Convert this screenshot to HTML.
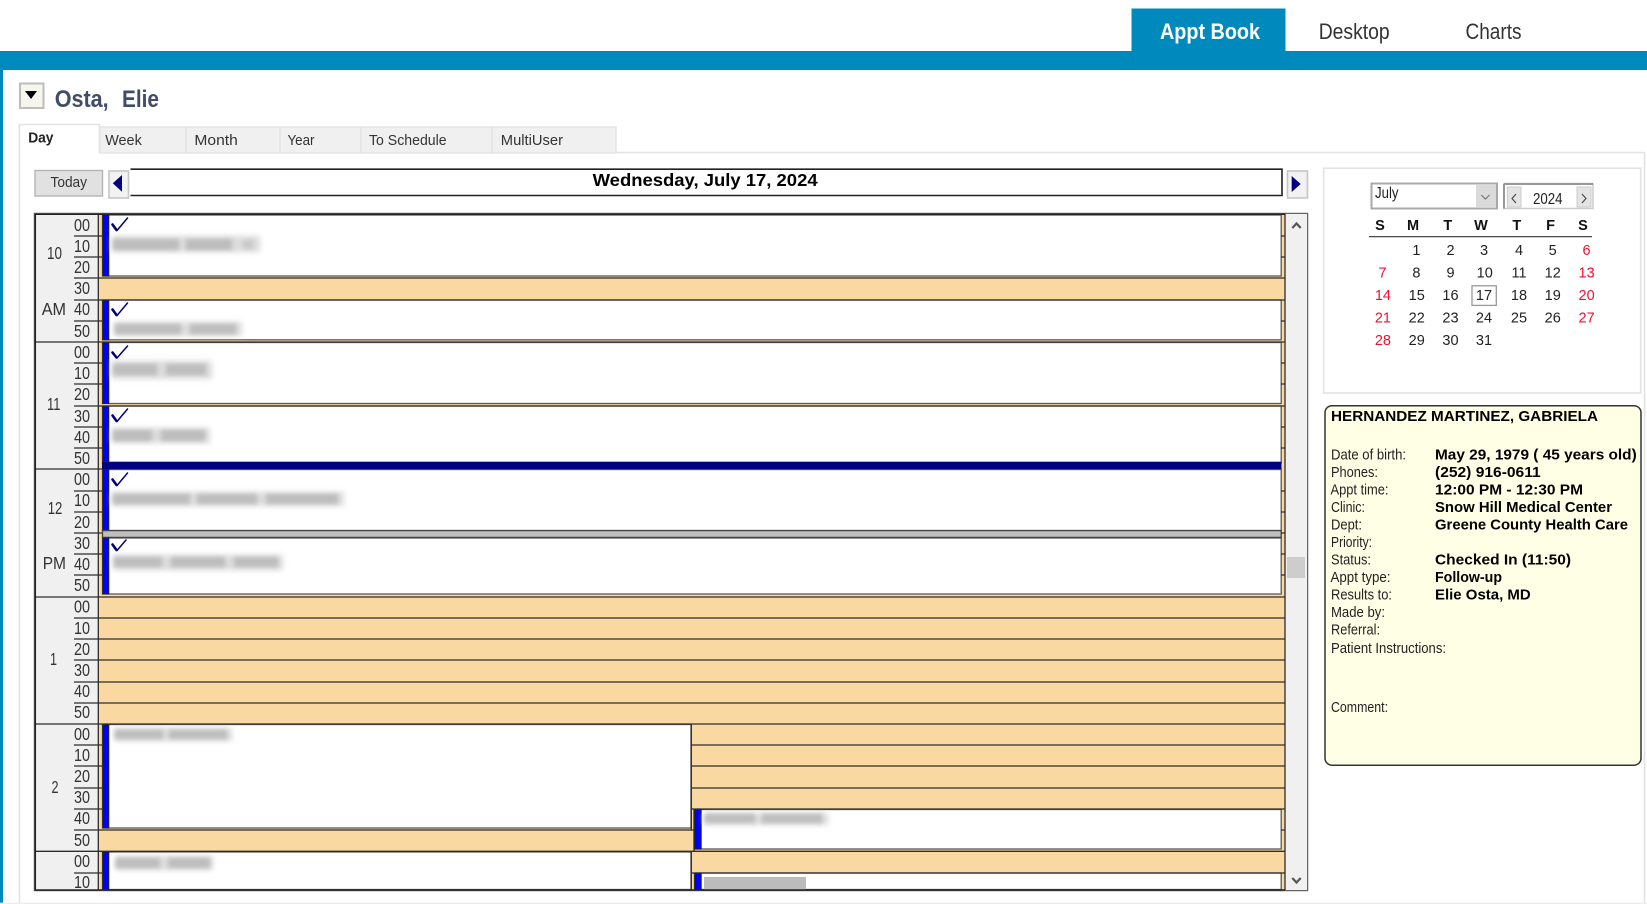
<!DOCTYPE html>
<html><head><meta charset="utf-8"><title>Appt Book</title>
<style>
html,body{margin:0;padding:0;background:#fff;width:1647px;height:904px;overflow:hidden}
svg{display:block}
text{font-family:"Liberation Sans",sans-serif;fill:#222}
.m{font-size:17.5px;fill:#333}
.h{font-size:17.5px;fill:#333}
.t{font-size:15px;fill:#333}
.d{font-size:14.5px;text-anchor:middle;fill:#222}
.l{font-size:15px;fill:#222}
.v{font-size:15px;font-weight:bold;fill:#000}
</style></head><body>
<svg width="1647" height="904" viewBox="0 0 1647 904" xmlns="http://www.w3.org/2000/svg">
<defs>
<filter id="b" x="-20%" y="-80%" width="140%" height="260%"><feGaussianBlur stdDeviation="3"/></filter>
<filter id="c" x="-10%" y="-80%" width="120%" height="260%"><feGaussianBlur stdDeviation="2"/></filter>
</defs>
<rect width="1647" height="904" fill="#fff"/>

<!-- header -->
<rect x="1131.5" y="8.5" width="154" height="44" fill="#0089bd"/>
<rect x="0" y="51" width="1647" height="19" fill="#0089bd"/>
<rect x="0" y="70" width="3" height="834" fill="#0089bd"/>
<text x="1160" y="39" font-size="22" font-weight="bold" style="fill:#fff" textLength="100" lengthAdjust="spacingAndGlyphs">Appt Book</text>
<text x="1318.7" y="39" font-size="22" style="fill:#333" textLength="71" lengthAdjust="spacingAndGlyphs">Desktop</text>
<text x="1465.5" y="39" font-size="22" style="fill:#333" textLength="56" lengthAdjust="spacingAndGlyphs">Charts</text>

<!-- title -->
<rect x="20" y="83.5" width="23.5" height="24.5" fill="#f6f6ec" stroke="#bdbdbd" stroke-width="2"/>
<path d="M25 91H37L31 99Z" fill="#000"/>
<text x="54.7" y="107" font-size="24" font-weight="bold" style="fill:#3f4d66" textLength="54" lengthAdjust="spacingAndGlyphs">Osta,</text>
<text x="122" y="107" font-size="24" font-weight="bold" style="fill:#3f4d66" textLength="37" lengthAdjust="spacingAndGlyphs">Elie</text>

<!-- tabs -->
<path d="M19.5 904V124.5H99.5V152.5H1644.5V904" fill="none" stroke="#e3e3e3" stroke-width="1.6"/>
<path d="M0 903.3H1647" stroke="#ececec" stroke-width="1.4"/>
<g fill="#f0f0f0" stroke="#e3e3e3" stroke-width="1.4">
<rect x="100" y="127" width="86" height="26"/>
<rect x="186" y="127" width="94" height="26"/>
<rect x="280" y="127" width="81" height="26"/>
<rect x="361" y="127" width="131" height="26"/>
<rect x="492" y="127" width="124" height="26"/>
</g>
<text x="28.2" y="142.7" font-size="15" font-weight="bold" style="fill:#222" textLength="25.3" lengthAdjust="spacingAndGlyphs">Day</text>
<text class="t" x="105.2" y="145" textLength="36.6" lengthAdjust="spacingAndGlyphs">Week</text>
<text class="t" x="194.4" y="145" textLength="43.4" lengthAdjust="spacingAndGlyphs">Month</text>
<text class="t" x="287.5" y="145" textLength="27" lengthAdjust="spacingAndGlyphs">Year</text>
<text class="t" x="369" y="145" textLength="77.6" lengthAdjust="spacingAndGlyphs">To Schedule</text>
<text class="t" x="500.8" y="145" textLength="62.2" lengthAdjust="spacingAndGlyphs">MultiUser</text>

<!-- nav bar -->
<rect x="35" y="170.5" width="67.5" height="25.5" fill="#e1e1e1" stroke="#b4b4b4" stroke-width="1.4"/>
<text x="50.5" y="187" font-size="15" style="fill:#333" textLength="36.5" lengthAdjust="spacingAndGlyphs">Today</text>
<rect x="109" y="171" width="19.5" height="27" fill="#f2f2f2" stroke="#c6c6c6" stroke-width="1.6"/>
<path d="M122 175V191.7L112.8 183.3Z" fill="#000080"/>
<rect x="130.5" y="169" width="1152" height="26.5" fill="#fff"/>
<path d="M130.5 169.2H1282V195.5H130.5" fill="none" stroke="#222" stroke-width="1.6"/>
<text x="592.6" y="186" font-size="17.5" font-weight="bold" style="fill:#000" textLength="225" lengthAdjust="spacingAndGlyphs">Wednesday, July 17, 2024</text>
<rect x="1287.5" y="171" width="20" height="27" fill="#f2f2f2" stroke="#c6c6c6" stroke-width="1.6"/>
<path d="M1291.7 176V192L1300.7 184Z" fill="#000080"/>

<!-- grid base -->
<rect x="34.5" y="213.5" width="1273" height="677" fill="#f0f0f0" stroke="#666" stroke-width="1.5"/>
<rect x="98" y="215" width="1187" height="675" fill="#fad8a1"/>

<!-- appointments -->
<g fill="#fff" stroke="#5a5a5a" stroke-width="1.3">
<rect x="102.5" y="215" width="1178.7" height="61"/>
<rect x="102.5" y="300" width="1178.7" height="39.8"/>
<rect x="102.5" y="342.5" width="1178.7" height="61"/>
<rect x="102.5" y="406" width="1178.7" height="57"/>
<rect x="102.5" y="469.5" width="1178.7" height="61"/>
<rect x="102.5" y="538" width="1178.7" height="56"/>
<rect x="102.5" y="724.5" width="588.5" height="103.5"/>
<rect x="694.5" y="809.5" width="586.7" height="39.5"/>
<rect x="102.5" y="852" width="588.5" height="37.5"/>
<rect x="694.5" y="873" width="586.7" height="16.5"/>
</g>
<rect x="102" y="461.7" width="1179.5" height="7.5" fill="#000080"/>
<rect x="102.5" y="530.6" width="1178.7" height="6.8" fill="#c0c0c0" stroke="#444" stroke-width="1.3"/>
<g fill="#0000ff" stroke="#222" stroke-width="1">
<rect x="102.8" y="215" width="6" height="61"/>
<rect x="102.8" y="300" width="6" height="39.8"/>
<rect x="102.8" y="342.5" width="6" height="61"/>
<rect x="102.8" y="406" width="6" height="56"/>
<rect x="102.8" y="469.5" width="6" height="60"/>
<rect x="102.8" y="538" width="6" height="56"/>
<rect x="102.8" y="724.5" width="6" height="103.5"/>
<rect x="694.8" y="809.5" width="6.4" height="39.5"/>
<rect x="102.8" y="852" width="6" height="37.5"/>
<rect x="694.8" y="873" width="6.4" height="16.5"/>
</g>

<!-- blurred names -->
<g fill="#dcdcdc" filter="url(#b)">
<rect x="112" y="236" width="148" height="16"/>
<rect x="114" y="322" width="128" height="14"/>
<rect x="112" y="361" width="100" height="18"/>
<rect x="112" y="428" width="98" height="15"/>
<rect x="112" y="492" width="232" height="14"/>
<rect x="113" y="555" width="170" height="15"/>
<rect x="114" y="728" width="118" height="13"/>
<rect x="115" y="856" width="98" height="14"/>
<rect x="704" y="813" width="124" height="12"/>
</g>
<g fill="#bdbdbd" filter="url(#c)">
<rect x="113" y="239" width="66" height="11"/><rect x="186" y="239" width="46" height="11"/><rect x="243" y="240" width="10" height="9" opacity=".6"/>
<rect x="115" y="324" width="66" height="10"/><rect x="190" y="324" width="46" height="10"/>
<rect x="113" y="364" width="44" height="11"/><rect x="166" y="364" width="40" height="11"/>
<rect x="113" y="430" width="39" height="11"/><rect x="161" y="430" width="44" height="11"/>
<rect x="113" y="494" width="77" height="10"/><rect x="197" y="494" width="60" height="10"/><rect x="266" y="494" width="72" height="10"/>
<rect x="114" y="557" width="48" height="10"/><rect x="171" y="557" width="54" height="10"/><rect x="234" y="557" width="44" height="10"/>
<rect x="115" y="730" width="48" height="9"/><rect x="169" y="730" width="58" height="9"/>
<rect x="116" y="858" width="44" height="10"/><rect x="168" y="858" width="42" height="10"/>
<rect x="705" y="814" width="50" height="9"/><rect x="762" y="814" width="60" height="9"/>
</g>
<rect x="704" y="877" width="102" height="12.5" fill="#bcbcbc"/>

<!-- checks -->
<g fill="none" stroke="#00007c" stroke-linecap="round" stroke-linejoin="round">
<path d="M112.5 224.5L116.5 230M117 230.5L127.5 218" stroke-width="1.5"/><path d="M112.5 224.5L116.5 230" stroke-width="2.6"/>
<path d="M112.5 309.5L116.5 315M117 315.5L127.5 303" stroke-width="1.5"/><path d="M112.5 309.5L116.5 315" stroke-width="2.6"/>
<path d="M112.5 352.5L116.5 357.5M117 358L127.5 346" stroke-width="1.5"/><path d="M112.5 352.5L116.5 357.5" stroke-width="2.6"/>
<path d="M112.5 415.5L116.5 421M117 421.5L127.5 409" stroke-width="1.5"/><path d="M112.5 415.5L116.5 421" stroke-width="2.6"/>
<path d="M112.5 479.5L116.5 485M117 485.5L127.5 473" stroke-width="1.5"/><path d="M112.5 479.5L116.5 485" stroke-width="2.6"/>
<path d="M112.5 544.5L116.5 550M117 550.5L126 540" stroke-width="1.5"/><path d="M112.5 544.5L116.5 550" stroke-width="2.6"/>
</g>

<!-- lines -->
<path fill="none" stroke="#2c2c2c" stroke-width="1.3" d="M74 236H102M74 257H102M74 321H102M74 363H102M74 384H102M74 427H102M74 448H102M74 491H102M74 512H102M74 533H102M74 554H102M74 575H102M74 745H102M74 766H102M74 788H102M74 809H102M74 873H102
M74 278H1285M74 300H1285M74 406H1285M74 618H1285M74 639H1285M74 660H1285M74 682H1285M74 703H1285
M35 342H1285M35 469H102M35 597H1285M35 724H1285M35 851.3H1285
M74 830H694M691 745H1285M691 766H1285M691 788H1285M691 809H1285M691 873H1285
M1281 236H1285M1281 257H1285M1281 321H1285M1281 363H1285M1281 384H1285M1281 427H1285M1281 448H1285M1281 491H1285M1281 512H1285M1281 533H1285M1281 554H1285M1281 575H1285M1281 830H1285
M98.3 215V890M1285 215V890M691.3 724V830M694 809V851M691.3 851V890"/>
<path d="M34.5 214.2H1285.5M35.3 214V890M34.5 890H1285" fill="none" stroke="#222" stroke-width="1.5"/>

<!-- minute labels -->
<g transform="translate(0,-1)">
<text class="m" x="74" y="232" textLength="16" lengthAdjust="spacingAndGlyphs">00</text>
<text class="m" x="74" y="253" textLength="16" lengthAdjust="spacingAndGlyphs">10</text>
<text class="m" x="74" y="274" textLength="16" lengthAdjust="spacingAndGlyphs">20</text>
<text class="m" x="74" y="295" textLength="16" lengthAdjust="spacingAndGlyphs">30</text>
<text class="m" x="74" y="316" textLength="16" lengthAdjust="spacingAndGlyphs">40</text>
<text class="m" x="74" y="338" textLength="16" lengthAdjust="spacingAndGlyphs">50</text>
<text class="m" x="74" y="359" textLength="16" lengthAdjust="spacingAndGlyphs">00</text>
<text class="m" x="74" y="380" textLength="16" lengthAdjust="spacingAndGlyphs">10</text>
<text class="m" x="74" y="401" textLength="16" lengthAdjust="spacingAndGlyphs">20</text>
<text class="m" x="74" y="423" textLength="16" lengthAdjust="spacingAndGlyphs">30</text>
<text class="m" x="74" y="444" textLength="16" lengthAdjust="spacingAndGlyphs">40</text>
<text class="m" x="74" y="465" textLength="16" lengthAdjust="spacingAndGlyphs">50</text>
<text class="m" x="74" y="486" textLength="16" lengthAdjust="spacingAndGlyphs">00</text>
<text class="m" x="74" y="507" textLength="16" lengthAdjust="spacingAndGlyphs">10</text>
<text class="m" x="74" y="529" textLength="16" lengthAdjust="spacingAndGlyphs">20</text>
<text class="m" x="74" y="550" textLength="16" lengthAdjust="spacingAndGlyphs">30</text>
<text class="m" x="74" y="571" textLength="16" lengthAdjust="spacingAndGlyphs">40</text>
<text class="m" x="74" y="592" textLength="16" lengthAdjust="spacingAndGlyphs">50</text>
<text class="m" x="74" y="613.5" textLength="16" lengthAdjust="spacingAndGlyphs">00</text>
<text class="m" x="74" y="635" textLength="16" lengthAdjust="spacingAndGlyphs">10</text>
<text class="m" x="74" y="656" textLength="16" lengthAdjust="spacingAndGlyphs">20</text>
<text class="m" x="74" y="677" textLength="16" lengthAdjust="spacingAndGlyphs">30</text>
<text class="m" x="74" y="698" textLength="16" lengthAdjust="spacingAndGlyphs">40</text>
<text class="m" x="74" y="719" textLength="16" lengthAdjust="spacingAndGlyphs">50</text>
<text class="m" x="74" y="741" textLength="16" lengthAdjust="spacingAndGlyphs">00</text>
<text class="m" x="74" y="762" textLength="16" lengthAdjust="spacingAndGlyphs">10</text>
<text class="m" x="74" y="783" textLength="16" lengthAdjust="spacingAndGlyphs">20</text>
<text class="m" x="74" y="804" textLength="16" lengthAdjust="spacingAndGlyphs">30</text>
<text class="m" x="74" y="825" textLength="16" lengthAdjust="spacingAndGlyphs">40</text>
<text class="m" x="74" y="847" textLength="16" lengthAdjust="spacingAndGlyphs">50</text>
<text class="m" x="74" y="868" textLength="16" lengthAdjust="spacingAndGlyphs">00</text>
<text class="m" x="74" y="889" textLength="16" lengthAdjust="spacingAndGlyphs">10</text>
</g>
<!-- hour labels -->
<text class="h" x="47" y="259" textLength="15" lengthAdjust="spacingAndGlyphs">10</text>
<text class="h" x="41.7" y="315" textLength="24.3" lengthAdjust="spacingAndGlyphs">AM</text>
<text class="h" x="47" y="410" textLength="13.5" lengthAdjust="spacingAndGlyphs">11</text>
<text class="h" x="47.7" y="514" textLength="14.6" lengthAdjust="spacingAndGlyphs">12</text>
<text class="h" x="42.7" y="569" textLength="23.3" lengthAdjust="spacingAndGlyphs">PM</text>
<text class="h" x="50" y="665" textLength="7" lengthAdjust="spacingAndGlyphs">1</text>
<text class="h" x="51.5" y="793" textLength="7" lengthAdjust="spacingAndGlyphs">2</text>

<!-- scrollbar -->
<rect x="1286" y="214" width="21" height="676" fill="#f0f0f0"/>
<path d="M1292.3 228L1296.5 223.5L1300.7 228" fill="none" stroke="#555" stroke-width="2.2"/>
<rect x="1287" y="557" width="18" height="21" fill="#cdcdcd"/>
<path d="M1292.3 878L1296.5 882.5L1300.7 878" fill="none" stroke="#555" stroke-width="2.2"/>

<!-- calendar -->
<rect x="1323.7" y="168.2" width="317" height="224.8" fill="#fff" stroke="#e3e3e3" stroke-width="1.6"/>
<rect x="1371.5" y="183.5" width="125.5" height="25" fill="#fff" stroke="#a8a8a8" stroke-width="2"/>
<rect x="1476" y="185" width="20" height="22" fill="#dadada"/>
<path d="M1481.3 195L1485.4 199L1489.5 195" fill="none" stroke="#777" stroke-width="1.2"/>
<text x="1375" y="198" font-size="15.5" style="fill:#222" textLength="23.5" lengthAdjust="spacingAndGlyphs">July</text>
<rect x="1504" y="183.5" width="89" height="25" fill="#fff" stroke="#ccc" stroke-width="1.5"/>
<path d="M1504 184H1593M1504 184V208.5" fill="none" stroke="#999" stroke-width="2"/>
<rect x="1507.5" y="187" width="13.5" height="20" fill="#e4e4e4" stroke="#ccc"/>
<rect x="1577" y="187" width="14" height="20" fill="#e4e4e4" stroke="#ccc"/>
<path d="M1516 194L1512 198.5L1516 203" fill="none" stroke="#444" stroke-width="1.1"/>
<path d="M1582 194L1586 198.5L1582 203" fill="none" stroke="#444" stroke-width="1.1"/>
<text x="1533" y="204" font-size="15.5" style="fill:#222" textLength="29.5" lengthAdjust="spacingAndGlyphs">2024</text>
<g font-size="14.5" font-weight="bold" text-anchor="middle">
<text x="1380" y="230" style="fill:#111">S</text><text x="1413" y="230" style="fill:#111">M</text><text x="1447.8" y="230" style="fill:#111">T</text><text x="1481" y="230" style="fill:#111">W</text><text x="1516.8" y="230" style="fill:#111">T</text><text x="1550.6" y="230" style="fill:#111">F</text><text x="1583" y="230" style="fill:#111">S</text>
</g>
<path d="M1369 236.7H1592" stroke="#333" stroke-width="1.2"/>
<rect x="1472" y="285.8" width="24.3" height="19.6" fill="#fff" stroke="#9a9a9a" stroke-width="1.3"/>
<text class="d" x="1416.4" y="255">1</text><text class="d" x="1450.5" y="255">2</text><text class="d" x="1484" y="255">3</text><text class="d" x="1519" y="255">4</text><text class="d" x="1552.7" y="255">5</text><text class="d" style="fill:#f01030" x="1586.6" y="255">6</text>
<text class="d" style="fill:#f01030" x="1382.5" y="277.5">7</text><text class="d" x="1416.4" y="277.5">8</text><text class="d" x="1450.5" y="277.5">9</text><text class="d" x="1484.7" y="277.5">10</text><text class="d" x="1519" y="277.5">11</text><text class="d" x="1552.7" y="277.5">12</text><text class="d" style="fill:#f01030" x="1586.6" y="277.5">13</text>
<text class="d" style="fill:#f01030" x="1382.9" y="300">14</text><text class="d" x="1416.7" y="300">15</text><text class="d" x="1450.5" y="300">16</text><text class="d" x="1484" y="300">17</text><text class="d" x="1519" y="300">18</text><text class="d" x="1552.7" y="300">19</text><text class="d" style="fill:#f01030" x="1586.6" y="300">20</text>
<text class="d" style="fill:#f01030" x="1382.9" y="322.5">21</text><text class="d" x="1416.7" y="322.5">22</text><text class="d" x="1450.5" y="322.5">23</text><text class="d" x="1484" y="322.5">24</text><text class="d" x="1519" y="322.5">25</text><text class="d" x="1552.7" y="322.5">26</text><text class="d" style="fill:#f01030" x="1586.6" y="322.5">27</text>
<text class="d" style="fill:#f01030" x="1382.9" y="345">28</text><text class="d" x="1416.7" y="345">29</text><text class="d" x="1450.5" y="345">30</text><text class="d" x="1484" y="345">31</text>

<!-- info panel -->
<rect x="1325" y="405.7" width="316" height="359.5" rx="7" fill="#ffffe6" stroke="#333" stroke-width="1.5"/>
<text x="1331" y="421" font-size="15" font-weight="bold" style="fill:#000" textLength="267" lengthAdjust="spacingAndGlyphs">HERNANDEZ MARTINEZ, GABRIELA</text>
<text class="l" x="1331" y="459.5" textLength="75" lengthAdjust="spacingAndGlyphs">Date of birth:</text>
<text class="l" x="1331" y="477" textLength="47" lengthAdjust="spacingAndGlyphs">Phones:</text>
<text class="l" x="1330.5" y="494.5" textLength="58" lengthAdjust="spacingAndGlyphs">Appt time:</text>
<text class="l" x="1331" y="512" textLength="34" lengthAdjust="spacingAndGlyphs">Clinic:</text>
<text class="l" x="1331" y="529.5" textLength="31" lengthAdjust="spacingAndGlyphs">Dept:</text>
<text class="l" x="1331" y="547" textLength="41" lengthAdjust="spacingAndGlyphs">Priority:</text>
<text class="l" x="1331" y="564.5" textLength="40" lengthAdjust="spacingAndGlyphs">Status:</text>
<text class="l" x="1330.5" y="582" textLength="60" lengthAdjust="spacingAndGlyphs">Appt type:</text>
<text class="l" x="1331" y="599.5" textLength="61" lengthAdjust="spacingAndGlyphs">Results to:</text>
<text class="l" x="1331" y="617" textLength="54" lengthAdjust="spacingAndGlyphs">Made by:</text>
<text class="l" x="1331" y="634.5" textLength="49" lengthAdjust="spacingAndGlyphs">Referral:</text>
<text class="l" x="1331" y="653" textLength="115" lengthAdjust="spacingAndGlyphs">Patient Instructions:</text>
<text class="l" x="1331" y="712" textLength="57" lengthAdjust="spacingAndGlyphs">Comment:</text>
<text class="v" x="1435" y="459.5" textLength="201.7" lengthAdjust="spacingAndGlyphs">May 29, 1979 ( 45 years old)</text>
<text class="v" x="1435" y="477" textLength="105.7" lengthAdjust="spacingAndGlyphs">(252) 916-0611</text>
<text class="v" x="1435" y="494.5" textLength="148" lengthAdjust="spacingAndGlyphs">12:00 PM - 12:30 PM</text>
<text class="v" x="1435" y="512" textLength="177" lengthAdjust="spacingAndGlyphs">Snow Hill Medical Center</text>
<text class="v" x="1435" y="529.5" textLength="193" lengthAdjust="spacingAndGlyphs">Greene County Health Care</text>
<text class="v" x="1435" y="564.5" textLength="136" lengthAdjust="spacingAndGlyphs">Checked In (11:50)</text>
<text class="v" x="1435" y="582" textLength="67" lengthAdjust="spacingAndGlyphs">Follow-up</text>
<text class="v" x="1435" y="599.5" textLength="95.7" lengthAdjust="spacingAndGlyphs">Elie Osta, MD</text>
</svg>
</body></html>
